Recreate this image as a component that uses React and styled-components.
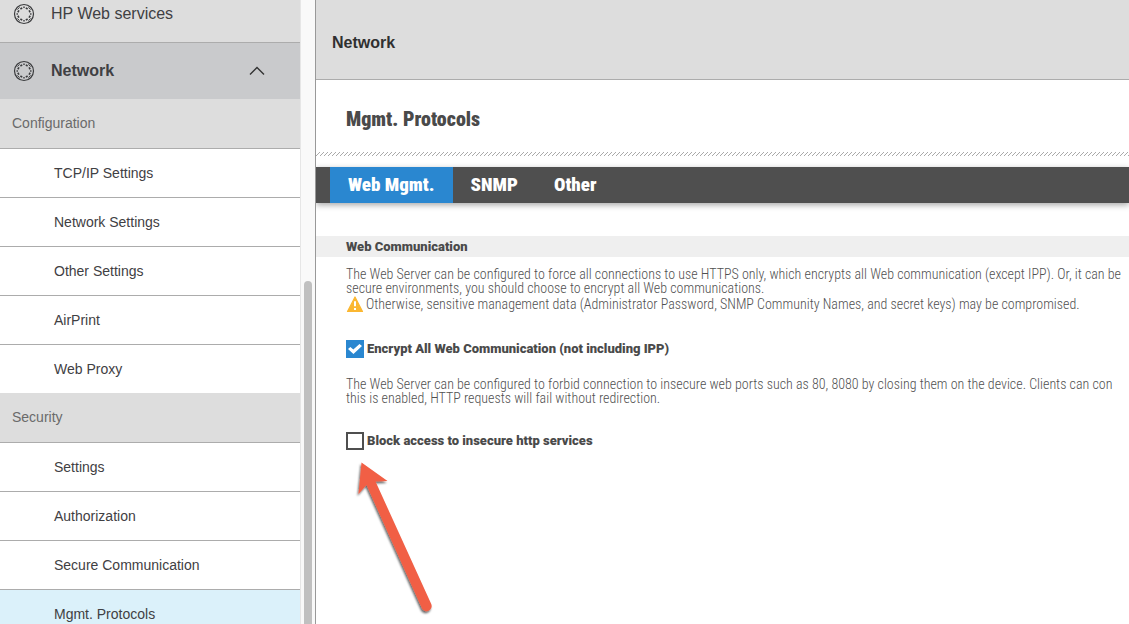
import React, { useState } from 'react';
import styled, { createGlobalStyle } from 'styled-components';

const GlobalStyle = createGlobalStyle`
  * {
    box-sizing: border-box;
  }

  body {
    margin: 0;
    background: #fff;
    color: #3f4043;
    font-family: 'Liberation Sans', Arial, sans-serif;
  }
`;

const Page = styled.div`
  display: flex;
  height: 100vh;
  overflow: hidden;
`;

const Sidebar = styled.nav`
  flex: none;
  width: 300px;
  overflow: hidden;
`;

const MenuButton = styled.button`
  display: flex;
  flex: none;
  align-items: center;
  gap: 16px;
  width: 100%;
  height: 56px;
  padding: 0 34px 0 13px;
  border: 0;
  background: ${({ $open }) => ($open ? '#c9cacc' : '#ddd')};
  color: inherit;
  font-family: inherit;
  font-size: 16px;
  font-weight: ${({ $open }) => ($open ? 700 : 400)};
  line-height: 20px;
  text-align: left;
`;

const MenuLabel = styled.span`
  flex: 1;
`;

// The menu is scrolled, its first entry sits partly above the window
const MenuTop = styled.div`
  display: flex;
  flex-direction: column;
  justify-content: flex-end;
  height: 43px;
  border-bottom: 1px solid #acacac;
`;

const GroupTitle = styled.h2`
  margin: 0;
  padding: 0 12px;
  background: #ddd;
  color: #6a6a6a;
  font-size: 14px;
  font-weight: 400;
  line-height: 49px;
`;

const MenuList = styled.ul`
  margin: 0;
  padding: 0;
  list-style: none;
`;

const MenuLink = styled.a`
  display: block;
  padding: 0 54px;
  border-top: 1px solid #acacac;
  background: ${({ $active }) => ($active ? '#dbf1fa' : '#fff')};
  color: inherit;
  font-size: 14px;
  line-height: 48px;
  text-decoration: none;
`;

const ScrollTrack = styled.div`
  display: grid;
  flex: none;
  grid-template-rows: 45% 1fr;
  width: 16px;
  padding: 0 3px;
  border-left: 1px solid #e6e6e6;
  border-right: 1px solid #999;
  background: #f9f9f9;
`;

const ScrollThumb = styled.div`
  grid-row: 2;
  border-radius: 4px 4px 0 0;
  background: #c0c0c0;
`;

const Main = styled.main`
  flex: 1;
  min-width: 0;
  overflow: hidden;
  color: #4a4a4a;
  font-family: Roboto, sans-serif;
`;

const Banner = styled.header`
  padding: 33px 16px 26px;
  border-bottom: 1px solid #acacac;
  background: #ddd;
  color: #303030;
  font-family: 'Liberation Sans', Arial, sans-serif;
  font-size: 16px;
  font-weight: 700;
  line-height: 20px;
`;

const PageTitle = styled.h1`
  margin: 0;
  padding: 27px 30px 21px;
  font-family: 'Roboto Condensed', Roboto, sans-serif;
  font-size: 20px;
  font-weight: 900;
  line-height: 24px;
`;

const Hatch = styled.svg`
  display: block;
  width: 100%;
  height: 4px;
`;

const Tabs = styled.div`
  display: flex;
  margin-top: 11px;
  padding-left: 14px;
  background: #4f4f4f;
  box-shadow: 0 2px 6px rgba(0, 0, 0, 0.35);
`;

const Tab = styled.button`
  height: 36px;
  padding: 0 18px;
  border: 0;
  background: ${({ $active }) => ($active ? '#2a87d0' : 'transparent')};
  color: #fff;
  font-family: 'Roboto Condensed', Roboto, sans-serif;
  font-size: 19px;
  font-weight: 900;
  line-height: 20px;
`;

const SectionTitle = styled.h2`
  margin: 33px 0 10px;
  padding: 0 30px;
  background: #efefef;
  font-size: 13px;
  font-weight: 900;
  line-height: 21px;
`;

const SectionBody = styled.div`
  padding-left: 30px;
`;

const Copy = styled.p`
  margin: 0;
  color: #505050;
  font-family: 'Roboto Condensed', Roboto, sans-serif;
  font-size: 14px;
  font-weight: 300;
  line-height: 14px;
  white-space: nowrap;
`;

const Warning = styled(Copy)`
  display: flex;
  align-items: center;
  gap: 2px;
  height: 18px;
`;

const Option = styled.label`
  display: flex;
  align-items: center;
  gap: 3px;
  margin: ${({ $last }) => ($last ? '27px 0 0' : '27px 0 19px')};
  font-size: 13px;
  font-weight: 900;
  line-height: 18px;
`;

const Checkbox = styled.input`
  display: grid;
  place-items: center;
  width: 18px;
  height: 18px;
  margin: 0;
  border: 2px solid #4f4f4f;
  appearance: none;
  background: #fff;

  &:checked {
    border-color: #2a87d0;
    background: #2a87d0;
  }

  &:checked::before {
    width: 14px;
    height: 10px;
    background: #fff;
    clip-path: polygon(0 50%, 17% 30%, 38% 56%, 82% 0, 100% 20%, 39% 100%);
    content: '';
  }
`;

const Arrow = styled.svg`
  position: absolute;
  top: 456px;
  left: 350px;
`;

const GlobeIcon = () => (
  <svg width='22' height='22' viewBox='0 0 22 22' fill='none' stroke='#3a3b3d'>
    <circle cx='11' cy='11' r='9.5' strokeWidth='1.2' />
    <path
      d='M4.8 9.2 6 7.4M7.4 6 9.2 4.8M12.8 4.8 14.6 6M16 7.4l1.2 1.8M17.2 12.8 16 14.6M14.6 16l-1.8 1.2M9.2 17.2 7.4 16M6 14.6l-1.2-1.8'
      strokeWidth='1.6'
    />
    <path d='M10.3 4.2h1.4M10.3 17.8h1.4M4.2 10.3v1.4M17.8 10.3v1.4' strokeWidth='1.4' />
    <path
      d='M4.4 6.6 6.6 4.4M15.4 4.4l2.2 2.2M17.6 15.4l-2.2 2.2M6.6 17.6l-2.2-2.2'
      strokeWidth='0.9'
    />
  </svg>
);

const ChevronUp = () => (
  <svg width='18' height='12' viewBox='0 0 18 12' fill='none' stroke='#333' strokeWidth='1.4'>
    <path d='M2 9.5 9 2.5l7 7' />
  </svg>
);

const WarningIcon = () => (
  <svg width='18' height='18' viewBox='0 0 18 18'>
    <path d='M9 2 16.5 16.5h-15Z' fill='#fbb731' stroke='#fbb731' strokeWidth='1.2' strokeLinejoin='round' />
    <path d='M9 6.3v5M9 13v2' stroke='#fff' strokeWidth='2' />
  </svg>
);

const groups = [
  {
    title: 'Configuration',
    items: ['TCP/IP Settings', 'Network Settings', 'Other Settings', 'AirPrint', 'Web Proxy'],
  },
  {
    title: 'Security',
    items: ['Settings', 'Authorization', 'Secure Communication', 'Mgmt. Protocols'],
  },
];

const tabs = ['Web Mgmt.', 'SNMP', 'Other'];

export default function App() {
  const [tab, setTab] = useState('Web Mgmt.');
  const [encrypt, setEncrypt] = useState(true);
  const [block, setBlock] = useState(false);

  return (
    <Page>
      <GlobalStyle />
      <Sidebar>
        <MenuTop>
          <MenuButton type='button'>
            <GlobeIcon />
            <MenuLabel>HP Web services</MenuLabel>
          </MenuButton>
        </MenuTop>
        <MenuButton type='button' $open aria-expanded='true'>
          <GlobeIcon />
          <MenuLabel>Network</MenuLabel>
          <ChevronUp />
        </MenuButton>
        {groups.map(({ title, items }) => (
          <section key={title}>
            <GroupTitle>{title}</GroupTitle>
            <MenuList>
              {items.map((item) => (
                <li key={item}>
                  <MenuLink href='#' $active={item === 'Mgmt. Protocols'}>
                    {item}
                  </MenuLink>
                </li>
              ))}
            </MenuList>
          </section>
        ))}
      </Sidebar>
      <ScrollTrack>
        <ScrollThumb />
      </ScrollTrack>
      <Main>
        <Banner>Network</Banner>
        <PageTitle>Mgmt. Protocols</PageTitle>
        <Hatch aria-hidden='true'>
          <defs>
            <pattern id='hatch' width='4' height='4' patternUnits='userSpaceOnUse'>
              <path d='M-1 5 5-1M-1 1 1-1M3 5 5 3' stroke='#aaa' strokeWidth='1' />
            </pattern>
          </defs>
          <rect width='100%' height='4' fill='url(#hatch)' />
        </Hatch>
        <Tabs role='tablist'>
          {tabs.map((name) => (
            <Tab
              key={name}
              type='button'
              role='tab'
              aria-selected={tab === name}
              $active={tab === name}
              onClick={() => setTab(name)}
            >
              {name}
            </Tab>
          ))}
        </Tabs>
        <SectionTitle>Web Communication</SectionTitle>
        <SectionBody>
          <Copy>
            The Web Server can be configured to force all connections to use HTTPS only, which
            encrypts all Web communication (except IPP). Or, it can be
            <br />
            secure environments, you should choose to encrypt all Web communications.
          </Copy>
          <Warning>
            <WarningIcon />
            Otherwise, sensitive management data (Administrator Password, SNMP Community Names,
            and secret keys) may be compromised.
          </Warning>
          <Option>
            <Checkbox
              type='checkbox'
              checked={encrypt}
              onChange={(e) => setEncrypt(e.target.checked)}
            />
            Encrypt All Web Communication (not including IPP)
          </Option>
          <Copy>
            The Web Server can be configured to forbid connection to insecure web ports such as
            80, 8080 by closing them on the device. Clients can con
            <br />
            this is enabled, HTTP requests will fail without redirection.
          </Copy>
          <Option $last>
            <Checkbox
              type='checkbox'
              checked={block}
              onChange={(e) => setBlock(e.target.checked)}
            />
            Block access to insecure http services
          </Option>
        </SectionBody>
      </Main>
      <Arrow width='90' height='164' viewBox='0 0 90 164' aria-hidden='true'>
        <defs>
          <filter id='shadow' x='-20%' y='-20%' width='140%' height='140%'>
            <feDropShadow dx='-1' dy='2' stdDeviation='1' floodColor='#000' floodOpacity='0.6' />
          </filter>
        </defs>
        <path
          d='M11.5 6.5 37.5 25 25.5 25.5 81 147.5A5 5 0 0 1 72 152.5L16.5 29 8.5 38Z'
          fill='#f15f45'
          filter='url(#shadow)'
        />
      </Arrow>
    </Page>
  );
}
